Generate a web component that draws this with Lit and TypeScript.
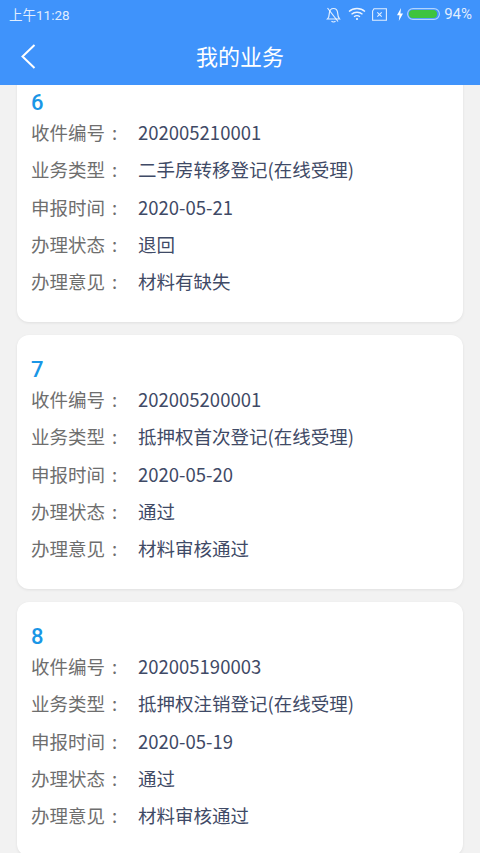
import { LitElement, html, css, svg } from "lit";
import { customElement } from "lit/decorators.js";

const cards = [
  { n: "6", id: "202005210001", type: "二手房转移登记(在线受理)", date: "2020-05-21", status: "退回", note: "材料有缺失" },
  { n: "7", id: "202005200001", type: "抵押权首次登记(在线受理)", date: "2020-05-20", status: "通过", note: "材料审核通过" },
  { n: "8", id: "202005190003", type: "抵押权注销登记(在线受理)", date: "2020-05-19", status: "通过", note: "材料审核通过" },
];

@customElement("app-root")
export class AppRoot extends LitElement {
  static styles = css`
    :host {
      display: flex;
      flex-direction: column;
      width: 480px;
      height: 853px;
      overflow: hidden;
      background: #f2f2f2;
      font-family: "Noto Sans CJK SC", "Noto Sans", Roboto, sans-serif;
    }
    .header {
      flex: none;
      height: 85px;
      background: #3f93fb;
      color: #fff;
      display: flex;
      flex-direction: column;
      position: relative;
      z-index: 2;
    }
    .status {
      height: 28px;
      display: flex;
      align-items: center;
      justify-content: space-between;
      padding: 0 8px 0 9px;
      font-size: 13.5px;
      color: rgba(255, 255, 255, 0.85);
      font-family: Roboto, "Noto Sans CJK SC", sans-serif;
    }
    .sicons {
      display: flex;
      align-items: center;
    }
    .sicons svg { display: block; }
    .pct { margin-left: 4px; font-size: 15px; }
    .nav {
      flex: 1;
      display: flex;
      align-items: center;
      justify-content: center;
      position: relative;
      font-size: 22px;
      padding-bottom: 3px;
    }
    .back {
      position: absolute;
      left: 20px;
      top: 16px;
      display: block;
    }
    .viewport {
      flex: 1;
      min-height: 0;
      overflow: hidden;
    }
    .list {
      margin: -17px 17px 0;
      display: flex;
      flex-direction: column;
      gap: 13px;
    }
    .card {
      height: 254px;
      box-sizing: border-box;
      background: #fff;
      border-radius: 12px;
      box-shadow: 0 1px 3px rgba(0, 0, 0, 0.08);
      padding: 23px 14px 0;
      flex: none;
    }
    .num {
      color: #1a96e6;
      font-size: 22px;
      line-height: 24px;
      height: 23px;
      font-weight: 500;
      font-family: Roboto, "Noto Sans", sans-serif;
    }
    .row {
      display: flex;
      height: 37.25px;
      align-items: center;
      font-size: 18.5px;
    }
    .label {
      width: 107px;
      flex: none;
      color: #6e6e6e;
      display: flex;
    }
    .colon { margin-left: 7px; }
    .value {
      color: #3f4a66;
      white-space: nowrap;
    }
    .num + .row { margin-top: -0.5px; }
  `;

  private icons() {
    return html`<div class="sicons">
      <svg width="15" height="17" viewBox="0 0 15 17" fill="none" stroke="#fff" stroke-opacity=".85" stroke-width="1.200">
        ${svg`<path d="M1.500 13c1.500-1.500 1.700-3.500 1.800-5.500C3.500 4.500 5.300 2.500 7.500 2.500s4 1.800 4.200 4.800c.1 2.200.5 4.200 1.800 5.700z"/><path d="M5.500 15.200c1 .9 3 .9 4 0"/><path d="M1.500 2l10.500 13.500"/>`}
      </svg>
      <svg style="margin-left:7px" width="18" height="14" viewBox="0 0 18 14" fill="none" stroke="#fff" stroke-opacity=".9" stroke-width="1.300">
        ${svg`<path d="M1 4.500c4.500-4 11.500-4 16 0"/><path d="M3.500 7.200c3-2.600 8-2.600 11 0"/><path d="M6 9.800c1.700-1.300 4.300-1.300 6 0"/><circle cx="9" cy="12" r="1" fill="#fff" stroke="none"/>`}
      </svg>
      <svg style="margin-left:6px" width="15" height="13" viewBox="0 0 15 13" fill="none" stroke="#fff" stroke-opacity=".85" stroke-width="1.100">
        ${svg`<path d="M.6 3L2 .8h12.400v11.400H.6z"/><path d="M5.300 4.300l4.400 4.400M9.700 4.300l-4.400 4.400"/>`}
      </svg>
      <svg style="margin-left:9px" width="8" height="13" viewBox="0 0 8 13">
        ${svg`<path d="M5 0L1 7.200h2.500L2.800 13 7 5.500H4.400z" fill="#fff"/>`}
      </svg>
      <svg style="margin-left:3px" width="33" height="12" viewBox="0 0 33 12">
        ${svg`<rect x=".6" y=".6" width="31.800" height="10.800" rx="5.400" fill="none" stroke="#fff" stroke-opacity=".6" stroke-width="1.100"/><rect x="2" y="2" width="28" height="8" rx="4" fill="#3ec43e"/>`}
      </svg>
      <span class="pct">94%</span>
    </div>`;
  }

  private row(label: string, value: string) {
    return html`<div class="row"><span class="label">${label}<span class="colon">:</span></span><span class="value">${value}</span></div>`;
  }

  render() {
    return html`
      <div class="header">
        <div class="status"><span>上午11:28</span>${this.icons()}</div>
        <div class="nav">
          <svg class="back" width="16" height="25" viewBox="0 0 16 25" fill="none" stroke="#fff" stroke-width="2">
            ${svg`<path d="M14.500 1L2.500 12.500 14.500 24"/>`}
          </svg>
          我的业务
        </div>
      </div>
      <div class="viewport">
        <div class="list">
          ${cards.map(
            (c) => html`<div class="card">
              <div class="num">${c.n}</div>
              ${this.row("收件编号", c.id)}
              ${this.row("业务类型", c.type)}
              ${this.row("申报时间", c.date)}
              ${this.row("办理状态", c.status)}
              ${this.row("办理意见", c.note)}
            </div>`
          )}
        </div>
      </div>
    `;
  }
}
